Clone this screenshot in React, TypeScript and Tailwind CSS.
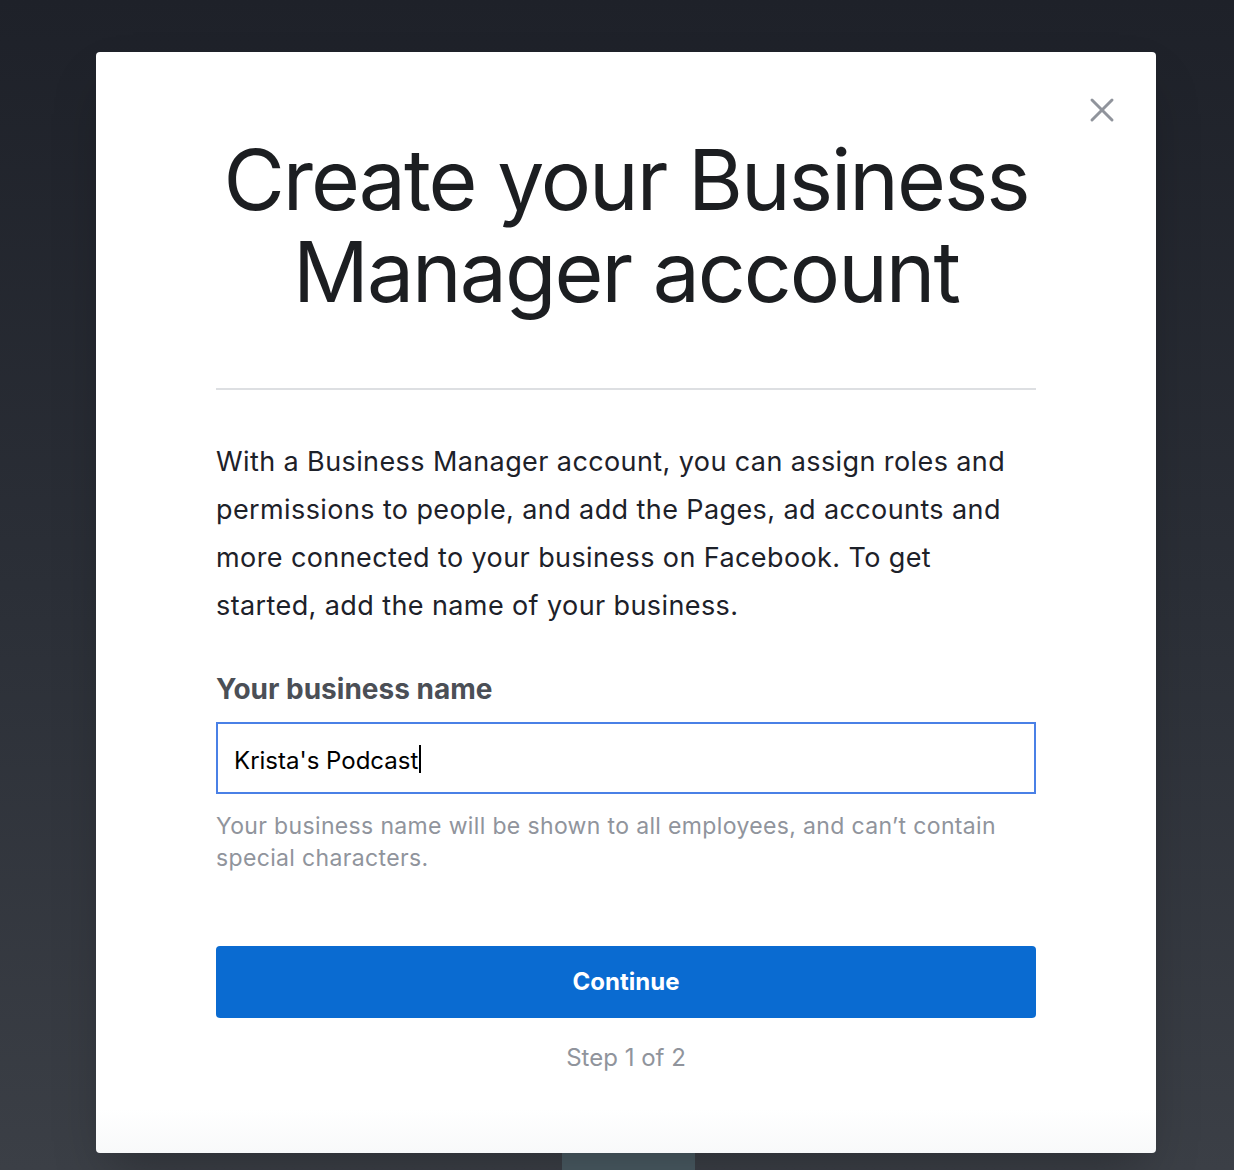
import { X } from "lucide-react";

const App = () => {
  return (
    <div className="relative w-[1234px] h-[1170px] overflow-hidden bg-gradient-to-b from-[#1e2129] via-[#2b2f37] to-[#3b3f46] font-['Inter',sans-serif]">
      <div className="pt-[52px] px-[96px]">
        <div className="relative w-[1060px] h-[1101px] rounded-[4px] shadow-2xl px-[120px] pt-[82px] bg-gradient-to-b from-white from-[96%] to-[#f8f9fa]">
          <button className="absolute top-[38px] right-[34px] text-[#90949c]">
            <X className="w-[40px] h-[40px]" strokeWidth={1.8} />
          </button>

          <h1 className="-mx-[40px] whitespace-nowrap text-center text-[#1c1e21] text-[84px] leading-[92px] tracking-[-2px] font-normal">
            Create your Business
            <br />
            Manager account
          </h1>

          <div className="mt-[70px] h-[2px] bg-[#dddfe2]" />

          <p className="mt-[48px] text-[#1d2129] text-[27px] leading-[48px] tracking-[0.4px]">
            With a Business Manager account, you can assign roles and permissions to people, and add the Pages, ad
            accounts and more connected to your business on Facebook. To get started, add the name of your business.
          </p>

          <label className="block mt-[41px] text-[#4b4f56] text-[28px] font-bold leading-[36px]">Your business name</label>

          <div className="mt-[15px] h-[72px] border-2 border-[#4a80e6] flex items-center px-[16px] pt-[5px]">
            <span className="text-[24px] text-black">Krista's Podcast</span>
            <span className="w-[2px] h-[28px] bg-black ml-[1px] -mt-[3px]" />
          </div>

          <p className="mt-[16px] text-[#90949c] text-[23px] leading-[32px] tracking-[0.35px]">
            Your business name will be shown to all employees, and can’t contain special characters.
          </p>

          <button className="mt-[72px] w-full h-[72px] rounded-[4px] bg-[#0a6bd1] text-white text-[24px] font-bold">
            Continue
          </button>

          <p className="mt-[24px] text-center text-[#90949c] text-[24px] leading-[32px]">Step 1 of 2</p>
        </div>
        <div className="ml-[466px] w-[133px] h-[20px] bg-[#4a5b63]" />
      </div>
    </div>
  );
};

export default App;
